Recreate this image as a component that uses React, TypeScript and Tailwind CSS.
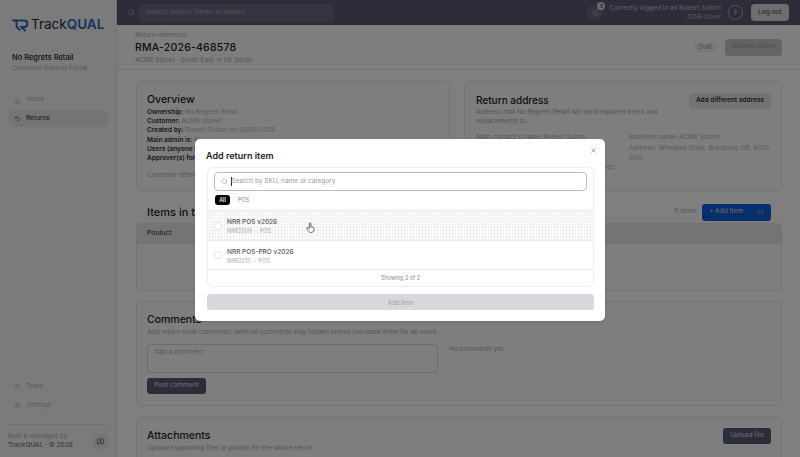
import { Home, Undo2, Users, Settings, MessageSquarePlus, Bell, Search, X } from 'lucide-react';

const Logo = () => (
  <div className="flex items-center">
    <svg width="18" height="14" viewBox="0 0 18 14" fill="none" className="mr-[1px]">
      <path d="M0.5 2.500H7.500M4.500 2.500V7C4.500 9.500 6 11 8.500 12" stroke="#2a62c0" strokeWidth="1.9" />
      <path d="M7.500 2.500H12C16.500 2.500 16.500 9 12 9H9.500L13.500 13" stroke="#2a62c0" strokeWidth="1.9" />
    </svg>
    <span className="text-[13.5px] leading-none text-[#1f2937]">Track</span>
    <span className="text-[13.5px] leading-none font-semibold text-[#2a62c0]">QUAL</span>
  </div>
);

const Sidebar = () => (
  <aside className="w-[117px] shrink-0 h-full flex flex-col bg-[#f7f7f7] border-r border-[#e2e2e2]">
    <div className="pl-[12px] pt-[18px]">
      <Logo />
    </div>
    <div className="pl-[12px] mt-[21px]">
      <div className="text-[7.5px] leading-[10px] font-medium text-[#222]">No Regrets Retail</div>
      <div className="text-[6.5px] leading-[10px] text-[#b0b0b0]">Customer Returns Portal</div>
    </div>
    <nav className="px-[8px] mt-[18px] flex flex-col gap-[1px]">
      <div className="h-[18px] flex items-center gap-[5px] pl-[6px] text-[#b4b4b4]">
        <Home size={7} />
        <span className="text-[6.5px]">Home</span>
      </div>
      <div className="h-[17px] flex items-center gap-[5px] pl-[6px] rounded-[6px] bg-[#e9e9e9] text-[#444]">
        <Undo2 size={7} />
        <span className="text-[6.5px] font-medium">Returns</span>
      </div>
    </nav>
    <div className="mt-auto px-[8px] flex flex-col">
      <div className="h-[19px] flex items-center gap-[5px] pl-[6px] text-[#b4b4b4]">
        <Users size={7} />
        <span className="text-[6.5px]">Team</span>
      </div>
      <div className="h-[19px] flex items-center gap-[5px] pl-[6px] text-[#b4b4b4]">
        <Settings size={7} />
        <span className="text-[6.5px]">Settings</span>
      </div>
      <div className="mt-[9px] border-t border-[#e2e2e2] pt-[7px] pb-[7px] flex items-center justify-between">
        <div className="text-[6.5px] leading-[9px] text-[#b0b0b0]">
          <div>Built &amp; managed by</div>
          <div className="text-[#777] font-medium">TrackQUAL · © 2026</div>
        </div>
        <div className="w-[15px] h-[15px] rounded-[3px] bg-[#e9e9e9] flex items-center justify-center text-[#222]">
          <MessageSquarePlus size={7} />
        </div>
      </div>
    </div>
  </aside>
);

const TopBar = () => (
  <header className="h-[25px] shrink-0 bg-[#585a70] flex items-center pl-[11px] pr-[11px]">
    <Search size={7} className="text-[#b8b8c4]" />
    <div className="ml-[4px] w-[195px] h-[18px] rounded-[3px] bg-[#686a80] flex items-center pl-[7px] text-[6.5px] text-[#a8a8b8]">
      Search returns, items, or repairs...
    </div>
    <div className="ml-auto relative w-[16px] h-[16px] rounded-full bg-[#686a80] flex items-center justify-center text-[#b8b8c4]">
      <Bell size={7} />
      <span className="absolute -top-[3px] -right-[2px] w-[8px] h-[8px] rounded-full bg-[#d8d8d8] text-[5px] leading-[8px] text-center font-semibold text-[#333]">3</span>
    </div>
    <div className="ml-[6px] text-right">
      <div className="text-[6.5px] leading-[9px] text-[#c4c4cc]">Currently logged in as Robert Sutton</div>
      <div className="text-[5.5px] leading-[8px] text-[#b0b0bc]">ACME Stores</div>
    </div>
    <div className="ml-[7px] w-[15px] h-[15px] rounded-full border border-[#a8a8b4] flex items-center justify-center text-[6px] font-semibold text-[#d0d0d6]">?</div>
    <div className="ml-[8px] w-[38px] h-[17px] rounded-[4px] bg-[#dcdcdc] flex items-center justify-center text-[6.5px] font-medium text-[#555]">Log out</div>
  </header>
);

const PageHeader = () => (
  <div className="h-[45px] shrink-0 border-b border-[#e2e2e2] bg-[#fcfcfc] flex items-center pl-[18px] pr-[18px] pt-[2px]">
    <div>
      <div className="text-[6.5px] leading-[9px] text-[#b0b0b0]">Return reference</div>
      <div className="text-[10.5px] leading-[15px] font-medium tracking-[0.2px] text-[#222]">RMA-2026-468578</div>
      <div className="text-[6.5px] leading-[10px] text-[#a8a8a8]">ACME Stores · South East -&gt; UK South</div>
    </div>
    <div className="ml-auto flex items-center gap-[9px] -mt-[2px]">
      <span className="h-[10px] px-[4px] rounded-[3px] bg-[#f0f0f0] text-[6px] leading-[10px] text-[#999]">Draft</span>
      <div className="w-[57px] h-[17px] rounded-[4px] bg-[#c9c9cf] flex items-center justify-center text-[6.5px] font-medium text-[#a0a0a8]">Submit return</div>
    </div>
  </div>
);

// the modal covers the right part of these lines, so they stop at its edge
const Overview = () => (
  <section className="h-[110px] rounded-[5px] border border-[#e4e4e4] bg-[#fcfcfc] pl-[10px] pt-[11px]">
    <h2 className="text-[10.5px] leading-[14px] font-medium text-[#222]">Overview</h2>
    <div className="mt-[1px] text-[6.5px] leading-[9.2px] font-semibold text-[#333]">
      <div>Ownership: <span className="font-normal text-[#b8b8b8]">No Regrets Retail</span></div>
      <div>Customer: <span className="font-normal text-[#b8b8b8]">ACME Stores</span></div>
      <div>Created by: <span className="font-normal text-[#b8b8b8]">Robert Sutton on 25/06/2026</span></div>
      <div>Main admin is: <span className="font-normal text-[#b8b8b8]">R</span></div>
      <div>Users (anyone w</div>
      <div>Approver(s) for</div>
    </div>
    <div className="mt-[8px] text-[6.5px] leading-[9px] text-[#a8a8a8]">Customer refere</div>
  </section>
);

const ReturnAddress = () => (
  <section className="h-[110px] rounded-[5px] border border-[#e4e4e4] bg-[#fcfcfc] pl-[11px] pr-[10px] pt-[10px]">
    <div className="flex justify-between">
      <div className="w-[190px] pt-[1px]">
        <h2 className="text-[10px] leading-[14px] font-medium text-[#222]">Return address</h2>
        <p className="mt-[1px] text-[6.5px] leading-[9px] text-[#aaa]">Address that No Regrets Retail will send repaired items and replacements to.</p>
      </div>
      <div className="mt-[1px] w-[82px] h-[16px] rounded-[4px] bg-[#e6e6e8] flex items-center justify-center text-[6.5px] font-semibold text-[#333]">Add different address</div>
    </div>
    <div className="mt-[7px] grid grid-cols-[153px_1fr] text-[6.5px] leading-[9.3px] text-[#b0b0b0]">
      <div>
        <div>Main contact's name: Robert Sutton</div>
        <div className="mt-[21px] pr-[14px] text-right">se):</div>
      </div>
      <div>
        <div>Business name: ACME Stores</div>
        <div className="mt-[2px]">Address: Wheatley Drive, Bracknell, GB, RG15 3UU</div>
      </div>
    </div>
  </section>
);

const Items = () => (
  <section className="mt-[10px]">
    <div className="h-[22px] flex items-center pl-[11px]">
      <h2 className="text-[11px] font-medium text-[#222]">Items in this</h2>
      <span className="ml-auto text-[6.5px] text-[#aaa]">0 items</span>
      <div className="ml-[5px] mr-[11px] w-[69px] h-[17px] rounded-[3px] bg-[#0e5fd8] flex items-center pl-[7px] pr-[7px] text-[6.5px] font-medium text-[#c8c8d8]">
        <span>+ Add Item</span>
        <span className="ml-auto text-[5.5px] text-[#7f9fe0]">(n)</span>
      </div>
    </div>
    <div className="h-[68px] rounded-[4px] border border-[#e4e4e4] bg-[#fcfcfc]">
      <div className="h-[20px] rounded-t-[4px] bg-[#e8e8e8] flex items-center pl-[10px] text-[6.5px] font-medium text-[#444]">Product</div>
    </div>
  </section>
);

const Comments = () => (
  <section className="mt-[10px] h-[105px] rounded-[5px] border border-[#e4e4e4] bg-[#fcfcfc] px-[10px] pt-[11px]">
    <h2 className="text-[10.5px] leading-[14px] font-medium text-[#222]">Comments</h2>
    <p className="text-[6.5px] leading-[9px] text-[#aaa] mt-[1px]">Add return-level comments. Internal comments stay hidden unless you mark them for all users.</p>
    <div className="mt-[7px] flex gap-[11px]">
      <div className="w-[291px] h-[29px] rounded-[3px] border border-[#d8d8d8] pl-[6px] pt-[3px] text-[6.5px] leading-[9px] text-[#b0b0b0]">Add a comment</div>
      <div className="pt-[1px] text-[6.5px] leading-[9px] text-[#aaa]">No comments yet.</div>
    </div>
    <div className="mt-[5px] w-[59px] h-[16px] rounded-[3px] bg-[#585a70] flex items-center justify-center text-[6.5px] font-medium text-[#d0d0d8]">Post comment</div>
  </section>
);

const Attachments = () => (
  <section className="mt-[11px] h-[60px] rounded-[5px] border border-[#e4e4e4] bg-[#fcfcfc] pl-[10px] pr-[10px] pt-[10px] flex justify-between">
    <div className="pt-[1px]">
      <h2 className="text-[10.5px] leading-[14px] font-medium text-[#222]">Attachments</h2>
      <p className="text-[6.5px] leading-[9px] text-[#aaa] mt-[1px]">Upload supporting files or photos for the whole return.</p>
    </div>
    <div className="w-[48px] h-[16px] rounded-[3px] bg-[#585a70] flex items-center justify-center text-[6.5px] font-medium text-[#d0d0d8]">Upload file</div>
  </section>
);

const ProductRow = ({ name, sku, active }: { name: string; sku: string; active?: boolean }) => (
  <div
    className={
      active
        ? 'h-[30px] flex items-center pl-[6px] border-b border-[#ececec] bg-[#fafafa] bg-[radial-gradient(circle,#e0e0e0_0.5px,transparent_0.6px)] bg-[length:3px_3px]'
        : 'h-[29px] flex items-center pl-[6px] border-b border-[#ececec]'
    }
  >
    <span className="w-[8px] h-[8px] rounded-full border border-[#e4e4e4] bg-white" />
    <div className="ml-[5px] pt-[2px]">
      <div className="text-[6.5px] leading-[10px] font-medium text-[#555]">{name}</div>
      <div className="text-[5.5px] leading-[9px] text-[#aaa]">{sku} &nbsp;·&nbsp; POS</div>
    </div>
  </div>
);

const Modal = () => (
  <div className="absolute inset-0 flex items-start justify-center pt-[139px] bg-black/50 bg-[radial-gradient(circle,#0000002b_0.6px,transparent_0.7px)] bg-[length:2px_2px]">
    <div className="relative w-[410px] h-[182px] rounded-[5px] bg-white pl-[12px] pr-[11px] pt-[10px] shadow-sm">
      <X size={7} className="absolute top-[8px] right-[8px] text-[#555]" />
      <h3 className="-ml-[1px] text-[9px] leading-[14px] font-semibold text-[#222]">Add return item</h3>
      <div className="mt-[4px] h-[120px] rounded-[6px] border border-[#eeeeee] flex flex-col">
        <div className="mx-[6px] mt-[4px] h-[19px] rounded-[4px] border-[1.5px] border-[#bcbcbc] flex items-center pl-[6px] text-[#aaa]">
          <Search size={7} />
          <span className="ml-[3px] w-[0.5px] h-[9px] bg-[#333]" />
          <span className="text-[6.5px] text-[#999]">Search by SKU, name or category</span>
        </div>
        <div className="mx-[7px] mt-[4px] mb-[5px] flex items-center gap-[8px]">
          <span className="w-[15px] h-[10px] rounded-[3px] bg-black text-white text-[5.5px] leading-[10px] text-center font-medium">All</span>
          <span className="text-[5.5px] leading-[10px] text-[#888]">POS</span>
        </div>
        <div className="border-t border-[#ececec]">
          <ProductRow name="NRR POS v2026" sku="NRR2009" active />
          <ProductRow name="NRR POS-PRO v2026" sku="NRR2010" />
        </div>
        <div className="flex-1 flex items-center justify-center text-[5.5px] text-[#888]">Showing 2 of 2</div>
      </div>
      <div className="mt-[7px] h-[16px] rounded-[3px] bg-[#d9d7de] flex items-center justify-center text-[6px] font-medium text-[#a9a7ae]">Add item</div>
      <svg width="9" height="11" viewBox="0 0 24 28" className="absolute left-[111px] top-[83px]" fill="#fff" stroke="#333" strokeWidth="2" strokeLinejoin="round">
        <path d="M9 13V4a2 2 0 0 1 4 0v8l6 1.500a3 3 0 0 1 2.400 3V20c0 4-3 7-7 7h-2c-3 0-5-2-6.500-4L2 17c-1-2 1-3.500 3-2.500L9 17z" />
      </svg>
    </div>
  </div>
);

export default function App() {
  return (
    <div className="relative w-screen h-screen overflow-hidden flex bg-white font-['Inter',sans-serif]">
      <Sidebar />
      <main className="flex-1 min-w-0 h-full flex flex-col bg-white">
        <TopBar />
        <PageHeader />
        <div className="flex-1 overflow-hidden pl-[19px] pr-[18px] pt-[11px]">
          <div className="grid grid-cols-[314px_1fr] gap-[14px]">
            <Overview />
            <ReturnAddress />
          </div>
          <Items />
          <Comments />
          <Attachments />
        </div>
      </main>
      <Modal />
    </div>
  );
}
